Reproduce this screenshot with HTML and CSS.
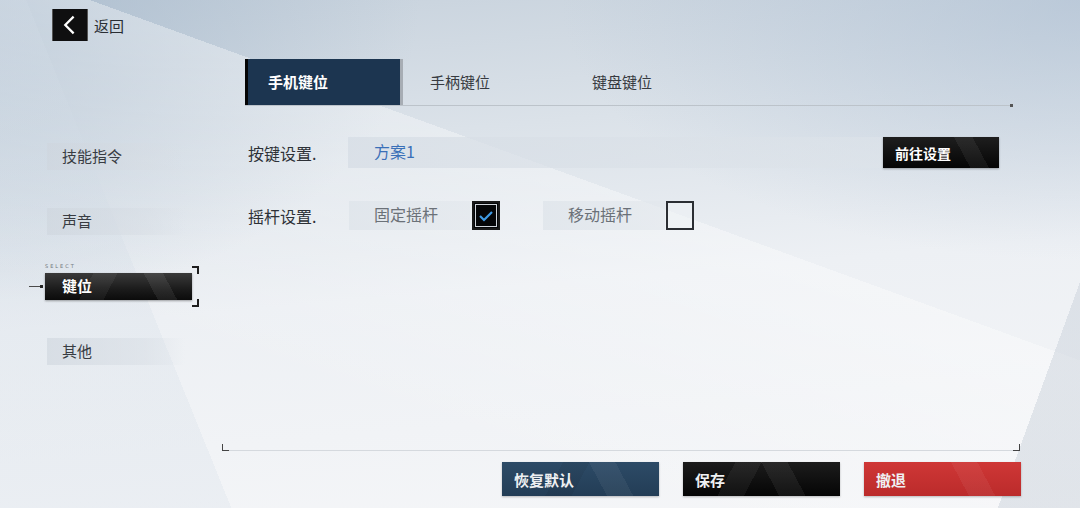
FILE: index.html
```html
<!DOCTYPE html>
<html lang="zh-CN">
<head>
  <meta charset="UTF-8" />
  <title>设置 - 键位</title>
  <link rel="stylesheet" href="styles.css">
</head>
<body>

  <div class="topbar">
    <button class="back-btn" aria-label="返回">
      <svg width="36" height="32" viewBox="0 0 36 32">
        <polyline points="21,8 13,16 21,24" fill="none" stroke="#fff" stroke-width="2.4" stroke-linecap="square" />
      </svg>
    </button>
    <span class="back-text">返回</span>
  </div>

  <div class="main">
    <aside class="sidebar">
      <div class="menu-item">技能指令</div>
      <div class="menu-item">声音</div>
      <div class="menu-item selected">
        键位
        <span class="pointer"></span>
        <span class="bracket"></span>
      </div>
      <div class="menu-item">其他</div>
    </aside>

    <section class="content">
      <div class="tabs">
        <div class="tab active">手机键位</div>
        <div class="tab">手柄键位</div>
        <div class="tab">键盘键位</div>
      </div>

      <div class="settings">
        <div class="row">
          <div class="label">按键设置.</div>
          <div class="field wide">方案1</div>
          <button class="go-btn">前往设置</button>
        </div>

        <div class="row row-stick">
          <div class="label">摇杆设置.</div>
          <div class="field option">固定摇杆</div>
          <div class="check checked">
            <svg width="18" height="16" viewBox="0 0 18 16">
              <polyline points="3,8 7,12 15,4" fill="none" stroke="#3f9be6" stroke-width="2.2" />
            </svg>
          </div>
          <div class="field option second">移动摇杆</div>
          <div class="check"></div>
        </div>
      </div>

      <div class="footer">
        <div class="frame-line"></div>
        <div class="actions">
          <button class="action navy">恢复默认</button>
          <button class="action black">保存</button>
          <button class="action red">撤退</button>
        </div>
      </div>
    </section>
  </div>

</body>
</html>
```

FILE: styles.css
```css
html, body {
  margin: 0;
  padding: 0;
}

body {
  width: 1080px;
  height: 508px;
  overflow: hidden;
  font-family: "Noto Sans CJK SC", "Noto Sans", sans-serif;
  color: #2c3036;
  background-color: #eef1f4;
  background-image:
    linear-gradient(110deg, transparent 93.5%, rgba(198, 206, 216, 0.45) 93.5%),
    linear-gradient(68deg, rgba(210, 220, 230, 0.25) 18%, transparent 18%),
    linear-gradient(200deg, rgba(255, 255, 255, 0) 40%, rgba(255, 255, 255, 0.35) 40%, rgba(255, 255, 255, 0) 75%),
    radial-gradient(ellipse 420px 300px at 0 0, rgba(165, 184, 203, 0.75), transparent),
    radial-gradient(ellipse 520px 260px at 100% 0, rgba(172, 190, 210, 0.6), transparent),
    linear-gradient(175deg, #c6d1dc 0%, #dbe2e9 28%, #edf0f4 55%, #f5f6f8 100%);
}

button {
  font-family: inherit;
  border: none;
  padding: 0;
  cursor: pointer;
}

/* top bar */

.topbar {
  display: flex;
  align-items: center;
  gap: 6px;
  height: 32px;
  padding: 9px 0 0 52px;
}

.back-btn {
  width: 36px;
  height: 32px;
  background: #0f0f10;
  border-left: 1px solid #555;
  border-right: 1px solid #555;
  display: flex;
  align-items: center;
  justify-content: center;
}

.back-text {
  font-size: 15px;
  color: #2a2e33;
}

/* layout */

.main {
  display: flex;
  margin-top: 18px;
  height: 449px;
}

.sidebar {
  width: 222px;
  padding-top: 84px;
  display: flex;
  flex-direction: column;
  gap: 38px;
}

.menu-item {
  position: relative;
  margin-left: 47px;
  width: 123px;
  height: 27px;
  line-height: 26px;
  padding-left: 15px;
  font-size: 15px;
  color: #383c42;
  background: linear-gradient(90deg, rgba(206, 213, 221, 0.6), rgba(214, 220, 227, 0.45) 70%, rgba(220, 225, 231, 0));
}

.menu-item.selected {
  margin-left: 45px;
  width: 130px;
  padding-left: 17px;
  color: #fff;
  font-weight: bold;
  background:
    linear-gradient(62deg, transparent 70%, rgba(255, 255, 255, 0.07) 70%, rgba(255, 255, 255, 0.07) 82%, transparent 82%),
    linear-gradient(118deg, transparent 30%, rgba(255, 255, 255, 0.05) 30%, rgba(255, 255, 255, 0.05) 45%, transparent 45%),
    linear-gradient(180deg, #3a3a3a, #1b1b1b 60%, #0b0b0b);
  box-shadow: 0 1px 2px rgba(0, 0, 0, 0.35);
}

.menu-item.selected::before {
  content: "SELECT";
  position: absolute;
  left: 0;
  top: -10px;
  font-size: 5px;
  line-height: 6px;
  letter-spacing: 2px;
  font-weight: normal;
  color: #6f747a;
  font-family: "DejaVu Sans", sans-serif;
}

/* small line with a dot leading into the selected item */
.pointer {
  position: absolute;
  left: -16px;
  top: 12px;
  width: 14px;
  height: 3px;
  background:
    radial-gradient(circle at 12.5px 1.5px, #222 1.4px, transparent 1.9px),
    linear-gradient(#4a4a4a, #4a4a4a) 0 1px / 12px 1px no-repeat;
}

/* corner brackets on the right of the selected item */
.bracket {
  position: absolute;
  right: -7px;
  top: -7px;
  bottom: -7px;
  width: 6px;
}

.bracket::before,
.bracket::after {
  content: "";
  position: absolute;
  right: 0;
  width: 5px;
  height: 6px;
  border-right: 2px solid #1e1e1e;
}

.bracket::before {
  top: 0;
  border-top: 2px solid #1e1e1e;
}

.bracket::after {
  bottom: 0;
  border-bottom: 2px solid #1e1e1e;
}

/* content */

.content {
  width: 800px;
  display: flex;
  flex-direction: column;
}

.tabs {
  position: relative;
  display: flex;
  margin-left: 23px;
  width: 767px;
  height: 46px;
  border-bottom: 1px solid #bcc3ca;
}

.tabs::after {
  content: "";
  position: absolute;
  right: -1px;
  bottom: -2px;
  width: 3px;
  height: 3px;
  background: #555;
}

.tab {
  width: 135px;
  padding-left: 27px;
  line-height: 46px;
  font-size: 15px;
  color: #363a40;
}

.tab.active {
  width: 132px;
  padding-left: 20px;
  background: #1c3550;
  border-left: 3px solid #050505;
  border-right: 3px solid #a7adb4;
  color: #fff;
  font-weight: bold;
}

.settings {
  padding: 31px 0 0 26px;
  display: flex;
  flex-direction: column;
  gap: 33px;
}

.row {
  display: flex;
  align-items: center;
  width: 751px;
  height: 31px;
}

.row-stick {
  height: 29px;
}

.label {
  width: 100px;
  font-size: 16px;
  line-height: 28px;
  color: #2d3137;
}

.field {
  height: 100%;
  line-height: 29px;
  padding-left: 26px;
  font-size: 16px;
  box-sizing: border-box;
  background: linear-gradient(90deg, rgba(214, 221, 229, 0.75), rgba(222, 228, 234, 0.55));
}

.field.wide {
  flex: 1;
  color: #3a70b8;
}

.field.option {
  width: 121px;
  line-height: 27px;
  padding-left: 25px;
  margin-left: 1px;
  color: #6b7178;
  background: linear-gradient(90deg, rgba(222, 228, 234, 0.75), rgba(226, 231, 236, 0.6));
}

.field.option.second {
  width: 122px;
  margin-left: 43px;
}

.go-btn {
  width: 116px;
  height: 31px;
  padding-left: 12px;
  text-align: left;
  font-size: 14px;
  font-weight: bold;
  color: #fff;
  background:
    linear-gradient(62deg, transparent 66%, rgba(255, 255, 255, 0.06) 66%, rgba(255, 255, 255, 0.06) 80%, transparent 80%),
    linear-gradient(180deg, #1e1e1e, #050505);
  box-shadow: 0 1px 2px rgba(0, 0, 0, 0.3);
}

.check {
  width: 24px;
  height: 25px;
  margin-left: 1px;
  border: 2px solid #2b2e33;
  display: flex;
  align-items: center;
  justify-content: center;
  background: rgba(240, 243, 246, 0.5);
}

.check.checked {
  width: 24px;
  height: 25px;
  margin-left: 2px;
  border: 2px solid #1a1a1a;
  outline: 1px solid #cfd4da;
  outline-offset: -4px;
  background: #050608;
}

/* footer */

.footer {
  margin-top: auto;
  padding-bottom: 12px;
}

.frame-line {
  position: relative;
  width: 798px;
  height: 1px;
  background: #d5d9de;
}

.frame-line::before,
.frame-line::after {
  content: "";
  position: absolute;
  bottom: 0;
  width: 6px;
  height: 6px;
  border-bottom: 1px solid #444;
}

.frame-line::before {
  left: 0;
  border-left: 1px solid #444;
}

.frame-line::after {
  right: 0;
  border-right: 1px solid #444;
}

.actions {
  display: flex;
  justify-content: flex-end;
  gap: 24px;
  margin-top: 11px;
  padding-right: 1px;
}

.action {
  width: 157px;
  height: 34px;
  padding-left: 12px;
  text-align: left;
  font-size: 15px;
  font-weight: bold;
  color: #eef0f2;
  box-shadow: 0 1px 2px rgba(0, 0, 0, 0.25);
}

.action.navy {
  background:
    linear-gradient(62deg, transparent 60%, rgba(255, 255, 255, 0.05) 60%, rgba(255, 255, 255, 0.05) 75%, transparent 75%),
    linear-gradient(118deg, transparent 35%, rgba(0, 0, 0, 0.06) 35%, rgba(0, 0, 0, 0.06) 50%, transparent 50%),
    linear-gradient(180deg, #2d4b67, #233d56);
}

.action.black {
  background:
    linear-gradient(62deg, transparent 55%, rgba(255, 255, 255, 0.06) 55%, rgba(255, 255, 255, 0.06) 70%, transparent 70%),
    linear-gradient(118deg, transparent 30%, rgba(255, 255, 255, 0.05) 30%, rgba(255, 255, 255, 0.05) 45%, transparent 45%),
    linear-gradient(180deg, #1c1c1c, #050505);
}

.action.red {
  background:
    linear-gradient(62deg, transparent 60%, rgba(255, 255, 255, 0.05) 60%, rgba(255, 255, 255, 0.05) 75%, transparent 75%),
    linear-gradient(180deg, #cf3736, #bb2b2b);
}
```
